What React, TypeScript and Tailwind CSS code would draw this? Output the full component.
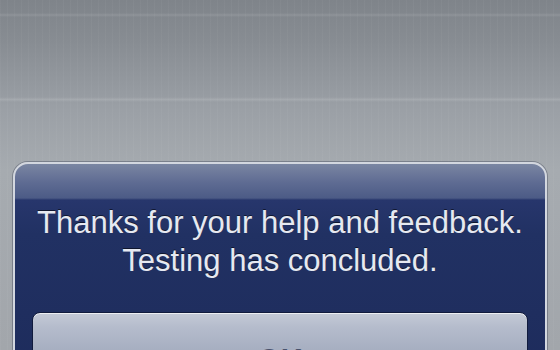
import React from "react";

const App = () => {
  return (
    <div
      className="relative h-[350px] w-[560px] overflow-hidden bg-[linear-gradient(180deg,#7f848a_0px,#878c92_40px,#9ba0a6_110px,#a6abb0_170px,#a2a6ab_100%)]"
      style={{ fontFamily: '"Liberation Sans", Arial, sans-serif' }}
    >
      {/* wallpaper grid */}
      <div className="pointer-events-none absolute inset-0 bg-[repeating-linear-gradient(90deg,rgba(255,255,255,0.03)_0px,rgba(255,255,255,0.03)_1px,transparent_1px,transparent_7px)]" />
      <div className="pointer-events-none absolute inset-x-0 top-[13px] h-[4px] bg-[linear-gradient(180deg,transparent,rgba(255,255,255,0.1),transparent)]" />
      <div className="pointer-events-none absolute inset-x-0 top-[97px] h-[5px] bg-[linear-gradient(180deg,transparent,rgba(255,255,255,0.12),transparent)]" />

      <div className="relative px-[13px] pt-[162px]">
        <div className="overflow-hidden rounded-[15px] border-[2px] border-[#d3d7df] bg-[linear-gradient(180deg,#7a86a2_0px,#5f6c93_18px,#4c5b86_34px,#27366c_36px,#213163_70px,#1d2b5b_100%)] shadow-[0_0_0_1px_rgba(70,78,96,0.45)]">
          <div className="pt-[40px] text-center text-[31px] leading-[38px] text-[#e6e9f1] [text-shadow:0_-1px_0_rgba(0,0,0,0.55)]">
            <p>Thanks for your help and feedback.</p>
            <p>Testing has concluded.</p>
          </div>

          <div className="px-[17px] pt-[32px]">
            <button className="h-[80px] w-full rounded-[8px] border border-[#111b3d] bg-[linear-gradient(180deg,#c4cad7_0px,#b5bccc_14px,#a7afc1_36px,#99a2b6_100%)] pt-[16px] text-[30px] font-bold leading-[38px] text-white shadow-[inset_0_1px_0_rgba(255,255,255,0.7)] [text-shadow:0_-1px_0_rgba(30,40,70,0.7)]">
              <span className="block">OK</span>
            </button>
          </div>
        </div>
      </div>
    </div>
  );
};

export default App;
